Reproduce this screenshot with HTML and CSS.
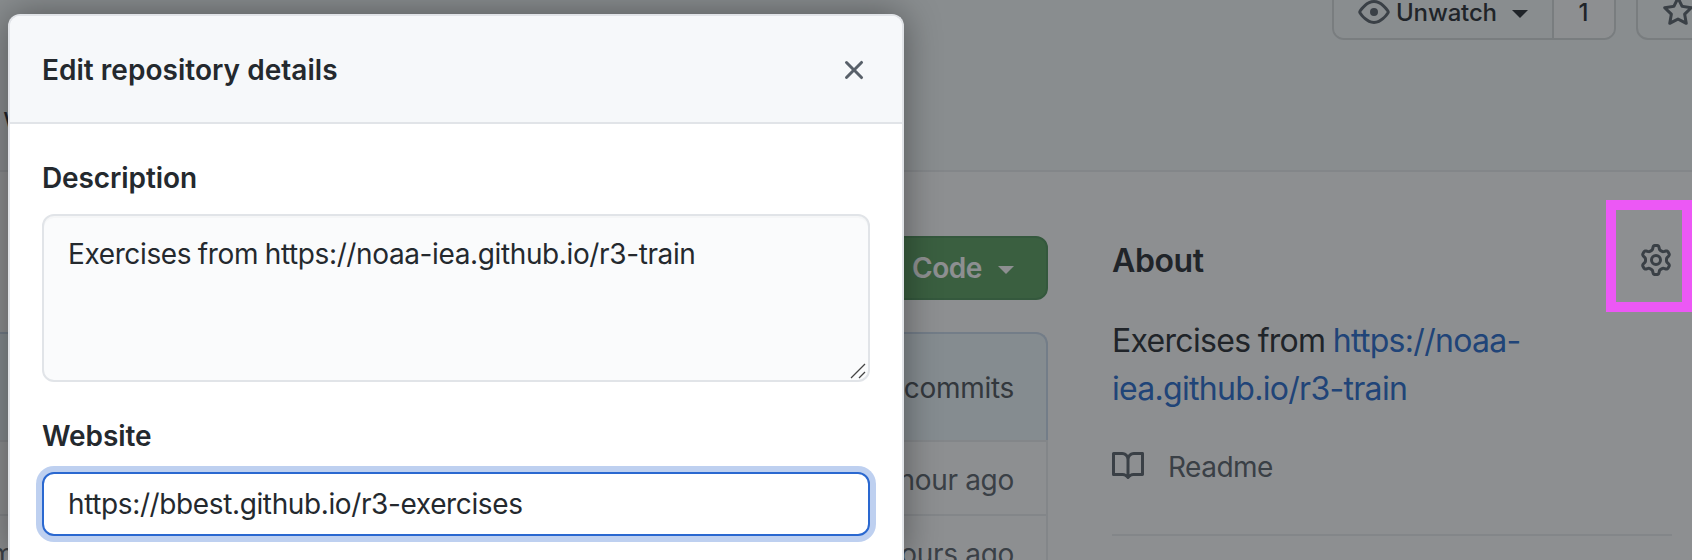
FILE: index.html
```html
<!DOCTYPE html>
<html lang="en">
<head>
<meta charset="utf-8">
<title>Edit repository details</title>
<link rel="stylesheet" href="styles.css">
</head>
<body>
<div class="page">
  <header class="repo-head">
    <div class="actions">
      <div class="btn-group">
        <button class="btn watch"><svg class="icon" viewBox="0 0 16 16"><path fill-rule="evenodd" d="M1.679 7.932c.412-.621 1.242-1.75 2.366-2.717C5.175 4.242 6.527 3.5 8 3.5c1.473 0 2.824.742 3.955 1.715 1.124.967 1.954 2.096 2.366 2.717a.119.119 0 010 .136c-.412.621-1.242 1.75-2.366 2.717C10.825 11.758 9.473 12.5 8 12.5c-1.473 0-2.824-.742-3.955-1.715C2.92 9.818 2.09 8.69 1.679 8.068a.119.119 0 010-.136zM8 2c-1.981 0-3.67.992-4.933 2.078C1.797 5.169.88 6.423.43 7.1a1.619 1.619 0 000 1.798c.45.678 1.367 1.932 2.637 3.024C4.329 13.008 6.019 14 8 14c1.981 0 3.67-.992 4.933-2.078 1.27-1.091 2.187-2.345 2.637-3.023a1.619 1.619 0 000-1.798c-.45-.678-1.367-1.932-2.637-3.023C11.671 2.992 9.981 2 8 2zm0 8a2 2 0 100-4 2 2 0 000 4z"/></svg><span class="watch-label">Unwatch</span><i class="caret"></i></button>
        <span class="count">1</span>
      </div>
      <button class="btn star"><svg class="icon" viewBox="0 0 16 16"><path fill-rule="evenodd" d="M8 .25a.75.75 0 01.673.418l1.882 3.815 4.21.612a.75.75 0 01.416 1.279l-3.046 2.97.719 4.192a.75.75 0 01-1.088.791L8 12.347l-3.766 1.98a.75.75 0 01-1.088-.79l.72-4.194L.818 6.374a.75.75 0 01.416-1.28l4.21-.611L7.327.668A.75.75 0 018 .25zm0 2.445L6.615 5.5a.75.75 0 01-.564.41l-3.097.45 2.24 2.184a.75.75 0 01.216.664l-.528 3.084 2.769-1.456a.75.75 0 01.698 0l2.77 1.456-.53-3.084a.75.75 0 01.216-.664l2.24-2.183-3.096-.45a.75.75 0 01-.564-.41L8 2.694v.001z"/></svg></button>
    </div>
    <nav class="tabs">w</nav>
  </header>
  <div class="content">
    <main class="files">
      <button class="btn-code"><span class="code-label">Code</span><i class="caret"></i></button>
      <div class="file-box">
        <div class="file-head"><span class="commits">commits</span></div>
        <div class="file-row"><span></span><span class="age">1 hour ago</span></div>
        <div class="file-row"><span class="msg">m</span><span class="age">2 hours ago</span></div>
      </div>
    </main>
    <aside class="about">
      <div class="about-head"><h2 class="about-title">About</h2>
        <svg class="icon muted" viewBox="0 0 16 16"><path fill-rule="evenodd" d="M7.429 1.525a6.593 6.593 0 011.142 0c.036.003.108.036.137.146l.289 1.105c.147.56.55.967.997 1.189.174.086.341.183.501.29.417.278.97.423 1.53.27l1.102-.303c.11-.03.175.016.195.046.219.31.41.641.573.989.014.031.022.11-.059.19l-.815.806c-.411.406-.562.957-.53 1.456a4.588 4.588 0 010 .582c-.032.499.119 1.05.53 1.456l.815.806c.08.08.073.159.059.19a6.494 6.494 0 01-.573.99c-.02.029-.086.074-.195.045l-1.103-.303c-.559-.153-1.112-.008-1.529.27-.16.107-.327.204-.5.29-.449.222-.851.628-.998 1.189l-.289 1.105c-.029.11-.101.143-.137.146a6.613 6.613 0 01-1.142 0c-.036-.003-.108-.037-.137-.146l-.289-1.105c-.147-.56-.55-.967-.997-1.189a4.502 4.502 0 01-.501-.29c-.417-.278-.97-.423-1.53-.27l-1.102.303c-.11.03-.175-.016-.195-.046a6.492 6.492 0 01-.573-.989c-.014-.031-.022-.11.059-.19l.815-.806c.411-.406.562-.957.53-1.456a4.587 4.587 0 010-.582c.032-.499-.119-1.05-.53-1.456l-.815-.806c-.08-.08-.073-.159-.059-.19a6.44 6.44 0 01.573-.99c.02-.029.086-.075.195-.045l1.103.303c.559.153 1.112.008 1.529-.27.16-.107.327-.204.5-.29.449-.222.851-.628.998-1.189l.289-1.105c.029-.11.101-.143.137-.146zM8 0c-.236 0-.47.01-.701.03-.743.065-1.29.615-1.458 1.261l-.29 1.106c-.017.066-.078.158-.211.224a5.994 5.994 0 00-.668.386c-.123.082-.233.09-.3.071L3.27 2.776c-.644-.177-1.392.02-1.82.63a7.977 7.977 0 00-.704 1.217c-.315.675-.111 1.422.363 1.891l.815.806c.05.048.098.147.088.294a6.084 6.084 0 000 .772c.01.147-.038.246-.088.294l-.815.806c-.474.469-.678 1.216-.363 1.891.2.428.436.835.704 1.218.428.609 1.176.806 1.82.63l1.103-.303c.066-.019.176-.011.299.071.213.143.436.272.668.386.133.066.194.158.212.224l.289 1.106c.169.646.715 1.196 1.458 1.26a8.094 8.094 0 001.402 0c.743-.064 1.29-.614 1.458-1.26l.29-1.106c.017-.066.078-.158.211-.224a5.98 5.98 0 00.668-.386c.123-.082.233-.09.3-.071l1.102.302c.644.177 1.392-.02 1.82-.63.268-.382.505-.789.704-1.217.315-.675.111-1.422-.364-1.891l-.814-.806c-.05-.048-.098-.147-.088-.294a6.1 6.1 0 000-.772c-.01-.147.039-.246.088-.294l.814-.806c.475-.469.679-1.216.364-1.891a7.992 7.992 0 00-.704-1.218c-.428-.609-1.176-.806-1.82-.63l-1.103.303c-.066.019-.176.011-.299-.071a5.991 5.991 0 00-.668-.386c-.133-.066-.194-.158-.212-.224L10.16 1.29C9.99.645 9.444.095 8.701.031A8.094 8.094 0 008 0zm1.5 8a1.5 1.5 0 11-3 0 1.5 1.5 0 013 0zM11 8a3 3 0 11-6 0 3 3 0 016 0z"/></svg></div>
      <p class="summary">Exercises from <a class="link">https://noaa-<br>iea.github.io/r3-train</a></p>
      <div class="readme"><svg class="icon muted" viewBox="0 0 16 16"><path fill-rule="evenodd" d="M0 1.75A.75.75 0 01.75 1h4.253c1.227 0 2.317.59 3 1.501A3.744 3.744 0 0111.006 1h4.245a.75.75 0 01.75.75v10.5a.75.75 0 01-.75.75h-4.507a2.25 2.25 0 00-1.591.659l-.622.621a.75.75 0 01-1.06 0l-.622-.621A2.25 2.25 0 005.258 13H.75a.75.75 0 01-.75-.75V1.75zm8.755 3a2.25 2.25 0 012.25-2.25H14.5v9h-3.757c-.71 0-1.4.201-1.992.572l.004-7.322zm-1.504 7.324l.004-5.073-.002-2.253A2.25 2.25 0 005.003 2.5H1.5v9h3.757a3.75 3.75 0 011.994.574z"/></svg><span class="readme-label">Readme</span></div>
    </aside>
  </div>
</div>
<div class="overlay"></div>
<section class="modal">
  <div class="modal-head"><h1 class="modal-title">Edit repository details</h1>
    <svg class="close" viewBox="0 0 16 16"><path fill-rule="evenodd" d="M3.72 3.72a.75.75 0 011.06 0L8 6.94l3.22-3.22a.75.75 0 111.06 1.06L9.06 8l3.22 3.22a.75.75 0 11-1.06 1.06L8 9.06l-3.22 3.22a.75.75 0 01-1.06-1.06L6.94 8 3.72 4.78a.75.75 0 010-1.06z"/></svg></div>
  <div class="modal-body">
    <div class="label label-desc">Description</div>
    <div class="field textarea"><span class="desc-text">Exercises from https://noaa-iea.github.io/r3-train</span>
      <svg class="grip" viewBox="0 0 16 16"><path d="M1 15L15 1M9 15l6-6"/></svg></div>
    <div class="label label-site">Website</div>
    <div class="field input"><span class="site-text">https://bbest.github.io/r3-exercises</span></div>
  </div>
</section>
<div class="highlight"></div>
</body>
</html>
```

FILE: styles.css
```css
* { box-sizing: border-box; }
body { margin: 0; width: 1692px; height: 560px; overflow: hidden; position: relative; background: #fff; color: #24292e; font-family: Inter, "Liberation Sans", sans-serif; font-size: 28px; line-height: 42px; }
h1, h2, p { margin: 0; }
button { font-family: inherit; color: inherit; margin: 0; }
.page { width: 1692px; height: 560px; overflow: hidden; }
.icon { width: 32px; height: 32px; flex: none; fill: #586069; }
.caret { border: 8px solid transparent; border-top-color: currentColor; border-bottom: 0; }

.repo-head { height: 172px; background: #f6fafa; border-bottom: 2px solid #eaecef; overflow: hidden; }
.actions { display: flex; gap: 20px; margin-top: -16px; padding-left: 1332px; }
.btn-group { display: flex; flex: none; width: 284px; height: 56px; border: 2px solid #d6dadb; border-radius: 12px; overflow: hidden; }
.btn { display: flex; align-items: center; background: #f6fafa; border: 0; padding: 0; font-size: 24px; font-weight: 500; }
.watch { width: 218px; padding-left: 24px; }
.watch .caret { margin-top: 3px; }
.watch-label { margin-left: 6px; width: 116px; text-align: left; letter-spacing: -.15px; font-weight: 550; }
.count { flex: 1; padding-right: 1px; border-left: 2px solid #d6dadb; background: #fff; font-size: 24px; font-weight: 550; line-height: 54px; text-align: center; }
.star { flex: none; width: 200px; height: 56px; padding: 0 24px; border: 2px solid #d6dadb; border-radius: 12px; }
.tabs { padding: 57px 0 0 3px; }

.content { display: flex; gap: 64px; height: 388px; }
.files { width: 1048px; flex: none; padding-top: 64px; }
.btn-code { display: flex; align-items: center; gap: 16px; width: 240px; height: 64px; margin-left: auto; padding: 0 0 0 102px; border: 2px solid #4d9156; border-radius: 12px; background: #599e5c; color: #fff; font-size: 28px; font-weight: 600; }
.btn-code .caret { margin-top: 3px; }
.code-label { width: 70px; letter-spacing: -.5px; text-align: left; }
.file-box { margin: 32px 0 0 -40px; }
.file-head { display: flex; justify-content: flex-end; height: 108px; padding: 33px 32px 0; border: 2px solid #cbdaec; border-bottom: 0; border-radius: 12px 12px 0 0; background: #eff8fc; color: #4a5056; letter-spacing: -.3px; }
.file-row { display: flex; justify-content: space-between; height: 74px; padding: 17px 32px 0; border: 2px solid #eaecef; border-bottom: 0; color: #586069; letter-spacing: -.3px; }
.msg { margin-left: -4px; }

.about { width: 560px; padding-top: 64px; }
.about-head { display: flex; justify-content: space-between; align-items: center; height: 48px; }
.about-title { padding-top: 2px; font-size: 32px; font-weight: 600; letter-spacing: -.4px; }
.summary { margin-top: 33px; font-size: 32px; line-height: 48px; letter-spacing: -.7px; word-spacing: -1px; }
.link { color: #2468cc; }
.readme { display: flex; align-items: center; gap: 24px; height: 123px; padding-bottom: 15px; border-bottom: 2px solid #eaecef; color: #586069; }
.readme-label { padding-top: 1px; letter-spacing: -.5px; }

.overlay { position: absolute; inset: 0; background: rgba(27, 31, 35, .5); }
.modal { position: absolute; left: 8px; top: 14px; width: 896px; height: 546px; border: 2px solid #e1e4e8; border-bottom: 0; border-radius: 12px 12px 0 0; background: #fff; box-shadow: 0 0 36px rgba(0, 0, 0, .4); }
.modal-head { display: flex; align-items: center; justify-content: space-between; height: 108px; padding: 2px 32px 0; border-bottom: 2px solid #e1e4e8; border-radius: 10px 10px 0 0; background: #f6f8fa; }
.modal-title { font-size: 28px; font-weight: 600; letter-spacing: .03px; }
.close { width: 32px; height: 32px; fill: #586069; }
.modal-body { padding: 33px 32px 0; }
.label { font-weight: 600; letter-spacing: -.1px; }
.field { border: 2px solid #e1e4e8; border-radius: 12px; padding: 0 24px; letter-spacing: -.38px; }
.textarea { position: relative; height: 168px; margin-top: 15px; padding-top: 17px; background: #fafbfc; box-shadow: inset 0 2px 0 rgba(225, 228, 232, .2); word-spacing: -.8px; }
.grip { position: absolute; right: 2px; bottom: 1px; width: 16px; height: 16px; fill: none; stroke: #444; stroke-width: 1.3; }
.label-site { margin-top: 33px; }
.input { height: 64px; margin-top: 15px; padding-top: 9px; border-color: #2a68d0; background: #fff; box-shadow: 0 0 0 6px #bed0f0; }
.highlight { position: absolute; left: 1606px; top: 200px; width: 86px; height: 112px; border: 10px solid #ec58f5; }
```
